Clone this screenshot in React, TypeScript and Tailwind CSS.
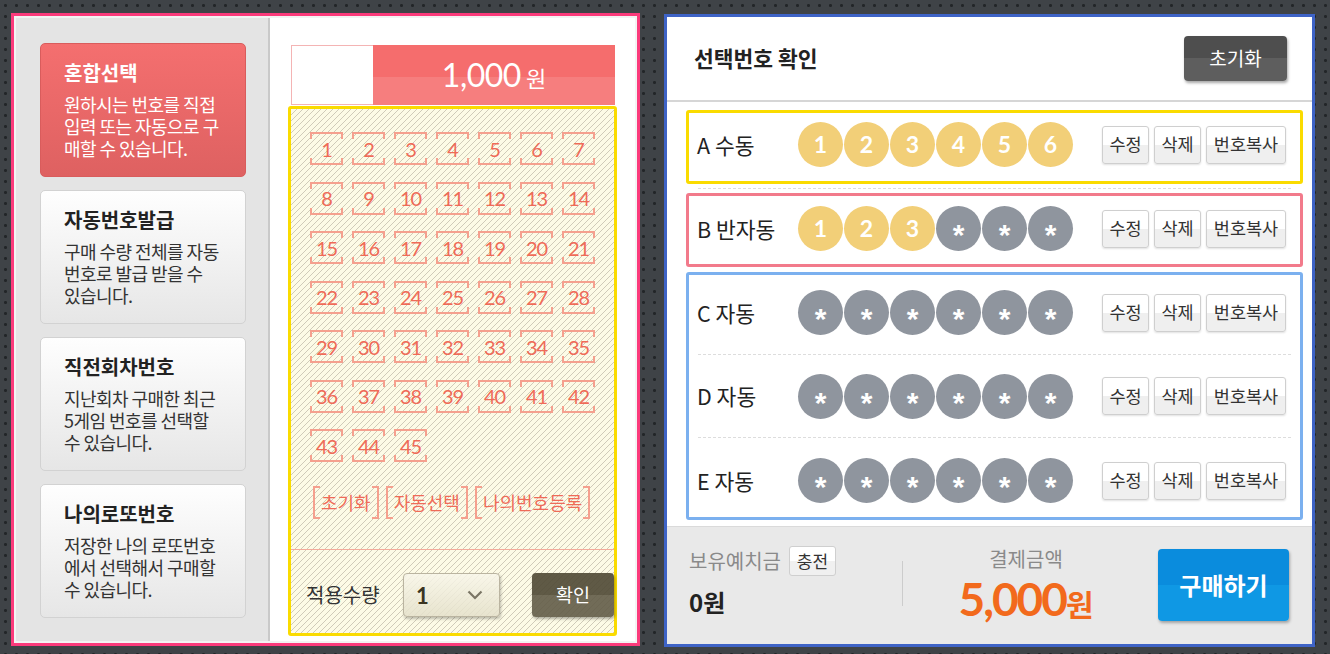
import * as React from 'react';

const KR = "font-['Noto_Sans_CJK_KR',sans-serif]";
const LATO = "font-['Lato','Noto_Sans_CJK_KR',sans-serif]";

const NUM_BOX =
  "flex h-[33px] w-[33px] items-center justify-center [background:linear-gradient(#f5a08e,#f5a08e)_left_top/100%_2px_no-repeat,linear-gradient(#f5a08e,#f5a08e)_left_bottom/100%_2px_no-repeat,linear-gradient(#f5a08e,#f5a08e)_left_top/2px_7px_no-repeat,linear-gradient(#f5a08e,#f5a08e)_right_top/2px_7px_no-repeat,linear-gradient(#f5a08e,#f5a08e)_left_bottom/2px_7px_no-repeat,linear-gradient(#f5a08e,#f5a08e)_right_bottom/2px_7px_no-repeat]";

const BRACKET_BTN =
  "flex h-[33px] items-center px-[8px] text-[18px] text-[#ef6b58] [background:linear-gradient(#f5a08e,#f5a08e)_left_top/2px_100%_no-repeat,linear-gradient(#f5a08e,#f5a08e)_right_top/2px_100%_no-repeat,linear-gradient(#f5a08e,#f5a08e)_left_top/7px_2px_no-repeat,linear-gradient(#f5a08e,#f5a08e)_right_top/7px_2px_no-repeat,linear-gradient(#f5a08e,#f5a08e)_left_bottom/7px_2px_no-repeat,linear-gradient(#f5a08e,#f5a08e)_right_bottom/7px_2px_no-repeat]";

const SMALL_BTN =
  "flex h-[38px] items-center justify-center rounded-[3px] border border-[#cfcfcf] bg-[linear-gradient(#ffffff_50%,#efefef_50%)] text-[17.5px] text-[#333] shadow-[0_1px_2px_rgba(0,0,0,0.12)]";

const modes = [
  { title: '혼합선택', lines: ['원하시는 번호를 직접', '입력 또는 자동으로 구', '매할 수 있습니다.'], active: true },
  { title: '자동번호발급', lines: ['구매 수량 전체를 자동', '번호로 발급 받을 수', '있습니다.'], active: false },
  { title: '직전회차번호', lines: ['지난회차 구매한 최근', '5게임 번호를 선택할', '수 있습니다.'], active: false },
  { title: '나의로또번호', lines: ['저장한 나의 로또번호', '에서 선택해서 구매할', '수 있습니다.'], active: false },
];

const numbers = Array.from({ length: 45 }, (_, i) => i + 1);

const Ball: React.FC<{ value: string }> = ({ value }) => {
  if (value === '*') {
    return (
      <span className="flex h-[45px] w-[45px] items-center justify-center rounded-full bg-[#8f959e] pt-[13px] font-['Liberation_Sans',sans-serif] text-[30px] font-bold leading-none text-white">
        *
      </span>
    );
  }
  return (
    <span className="flex h-[45px] w-[45px] items-center justify-center rounded-full bg-[#f2cf78] font-['Lato',sans-serif] text-[23px] font-bold leading-none text-white">
      {value}
    </span>
  );
};

interface IRowProps {
  label: string;
  balls: string[];
  className?: string;
}

const GameRow: React.FC<IRowProps> = ({ label, balls, className }) => (
  <div className={`flex items-center pl-[8px] pr-[14px] ${className ?? ''}`}>
    <span className="w-[101px] text-[21.5px] leading-[26px] text-[#222]">{label}</span>
    <div className="flex gap-[1px]">
      {balls.map((b, i) => (
        <Ball key={i} value={b} />
      ))}
    </div>
    <div className="ml-auto flex gap-[5px]">
      <span className={`${SMALL_BTN} w-[47px]`}>수정</span>
      <span className={`${SMALL_BTN} w-[47px]`}>삭제</span>
      <span className={`${SMALL_BTN} w-[80px]`}>번호복사</span>
    </div>
  </div>
);

export default function App() {
  return (
    <div
      className={`flex h-[654px] w-full gap-[24px] overflow-hidden bg-[#3f4347] bg-[radial-gradient(circle,#222528_1.2px,transparent_1.8px)] bg-[length:11px_11px] pl-[11px] pt-[13px] ${KR}`}
    >
      {/* left: number picking panel */}
      <div className="h-[633px] w-[629px] border-[3px] border-[#fb3a7b]">
        <div className="flex h-full border-2 border-[#f3f3f3]">
          <div className="flex w-[254px] flex-col gap-[13px] border-r-2 border-[#c9c9c9] bg-[#e4e4e4] pl-[24px] pt-[25px]">
            {modes.map((m) => (
              <div
                key={m.title}
                className={
                  m.active
                    ? 'h-[134px] w-[206px] rounded-[5px] border border-[#d95c5c] bg-[linear-gradient(#f46f6f,#de6161)] pl-[23px] pt-[15px] text-white'
                    : 'h-[134px] w-[206px] rounded-[5px] border border-[#d2d2d2] bg-[linear-gradient(#fefefe,#e6e6e6)] pl-[23px] pt-[15px] text-[#333]'
                }
              >
                <div className={m.active ? 'text-[20px] font-bold leading-[28px]' : 'text-[20px] font-bold leading-[28px] text-[#222]'}>
                  {m.title}
                </div>
                <p className="mt-[6px] text-[18px] leading-[22px] tracking-[-0.03em]">
                  {m.lines[0]}
                  <br />
                  {m.lines[1]}
                  <br />
                  {m.lines[2]}
                </p>
              </div>
            ))}
          </div>

          <div className="flex-1 bg-white pl-[18px] pt-[27px]">
            <div className="ml-[3px] flex h-[60px] w-[324px]">
              <div className="w-[82px] border-y border-l border-[#f4b4b4] bg-white" />
              <div className="flex flex-1 items-baseline justify-center gap-[5px] bg-[linear-gradient(#f56d6d_53%,#f67e7e_53%)] pt-[10px] text-white">
                <span className={`${LATO} text-[32px] leading-[40px] tracking-[-0.5px]`}>1,000</span>
                <span className="text-[22px] leading-[30px]">원</span>
              </div>
            </div>

            <div className="mt-[1px] flex h-[530px] w-[329px] flex-col rounded-[3px] border-[3px] border-[#fadb00] bg-[#fdfbe6] bg-[linear-gradient(135deg,transparent_0_43%,#d0cbb9_43%_57%,transparent_57%)] bg-[length:6px_6px]">
              <div className="grid grid-cols-[repeat(7,33px)] gap-x-[9px] gap-y-[16.5px] pl-[19px] pt-[23px]">
                {numbers.map((n) => (
                  <div key={n} className={NUM_BOX}>
                    <span className={`${LATO} text-[20px] leading-none tracking-[-1px] text-[#ef6b58]`}>{n}</span>
                  </div>
                ))}
              </div>

              <div className="mt-[24px] flex gap-[7px] pl-[22px]">
                <span className={BRACKET_BTN}>초기화</span>
                <span className={BRACKET_BTN}>자동선택</span>
                <span className={BRACKET_BTN}>나의번호등록</span>
              </div>

              <div className="mt-[30px] h-px bg-[#f3ab9b]" />

              <div className="flex items-center pl-[15px] pt-[23px]">
                <span className="w-[74px] text-[20px] text-[#333]">적용수량</span>
                <div className="ml-[23px] flex h-[44px] w-[97px] items-center justify-between rounded-[4px] border border-[#bab4a0] bg-[linear-gradient(rgba(248,246,234,0.85),rgba(228,224,202,0.85))] pl-[12px] pr-[16px] shadow-[1px_2px_3px_rgba(0,0,0,0.25)]">
                  <span className={`${LATO} text-[22px] font-bold text-[#3b3522]`}>1</span>
                  <svg width="16" height="10" viewBox="0 0 16 10">
                    <path d="M1.5 1.5 L8 8 L14.5 1.5" fill="none" stroke="#7a7565" strokeWidth="2.2" />
                  </svg>
                </div>
                <div className="ml-[32px] flex h-[44px] w-[82px] items-center justify-center rounded-[4px] bg-[linear-gradient(rgba(82,76,56,0.92)_50%,rgba(98,92,72,0.9)_50%)] text-[18.5px] text-white shadow-[1px_2px_3px_rgba(0,0,0,0.3)]">
                  확인
                </div>
              </div>
            </div>
          </div>
        </div>
      </div>

      {/* right: selected numbers panel */}
      <div className="mt-[1px] flex h-[633px] w-[651px] flex-col border-[3px] border-[#3e63c6] bg-white">
        <div className="flex h-[85px] items-center justify-between border-b-2 border-[#d6d6d6] pl-[27px] pr-[25px]">
          <span className="text-[21.5px] font-bold text-[#222]">선택번호 확인</span>
          <span className="flex h-[45px] w-[103px] items-center justify-center rounded-[4px] bg-[linear-gradient(#4e4e4e_50%,#5e5e5e_50%)] text-[19px] text-white shadow-[1px_2px_3px_rgba(0,0,0,0.35)]">
            초기화
          </span>
        </div>

        <div className="flex flex-col pl-[19px] pr-[9px] pt-[8px]">
          <div className="h-[74px] rounded-[3px] border-[3px] border-[#fadb00]">
            <GameRow label="A 수동" balls={['1', '2', '3', '4', '5', '6']} className="h-full pb-[5px]" />
          </div>
          <div className="mx-[12px] my-[4px] border-t border-dashed border-[#dddddd]" />
          <div className="h-[74px] rounded-[3px] border-[3px] border-[#f27a8b]">
            <GameRow label="B 반자동" balls={['1', '2', '3', '*', '*', '*']} className="h-full pb-[3px]" />
          </div>
          <div className="mt-[5px] flex h-[248px] flex-col rounded-[3px] border-[3px] border-[#7bb0ef]">
            <GameRow label="C 자동" balls={['*', '*', '*', '*', '*', '*']} className="h-[79px] pb-[4px]" />
            <div className="mx-[9px] border-t border-dashed border-[#dddddd]" />
            <GameRow label="D 자동" balls={['*', '*', '*', '*', '*', '*']} className="h-[82px]" />
            <div className="mx-[9px] border-t border-dashed border-[#dddddd]" />
            <GameRow label="E 자동" balls={['*', '*', '*', '*', '*', '*']} className="flex-1 pt-[6px]" />
          </div>
        </div>

        <div className="mt-[6px] flex flex-1 items-start border-t border-[#dadada] bg-[#e9e9e9] pl-[22px] pt-[19px]">
          <div className="w-[213px]">
            <div className="flex items-center gap-[8px]">
              <span className="text-[20px] text-[#8a8a8a]">보유예치금</span>
              <span className="flex h-[30px] w-[47px] items-center justify-center rounded-[3px] border border-[#cfcfcf] bg-[linear-gradient(#ffffff_50%,#f0f0f0_50%)] text-[17px] text-[#333]">
                충전
              </span>
            </div>
            <div className="mt-[12px] text-[24px] font-bold leading-[28px] text-[#222]">0원</div>
          </div>
          <div className="mt-[15px] h-[45px] w-px bg-[#cccccc]" />
          <div className="flex w-[246px] flex-col items-center pt-[2px]">
            <span className="text-[20px] leading-[22px] text-[#8a8a8a]">결제금액</span>
            <span className="mt-[8px] flex items-baseline text-[#f26a1c]">
              <span className={`${LATO} text-[46px] font-bold leading-[42px] tracking-[-2px]`}>5,000</span>
              <span className="text-[30px] font-bold leading-[34px]">원</span>
            </span>
          </div>
          <span className="ml-[9px] mt-[3px] flex h-[72px] w-[131px] items-center justify-center rounded-[4px] bg-[linear-gradient(#0a8cdd_50%,#0f98e4_50%)] text-[24px] font-bold text-white shadow-[1px_2px_3px_rgba(0,0,0,0.3)]">
            구매하기
          </span>
        </div>
      </div>
    </div>
  );
}
